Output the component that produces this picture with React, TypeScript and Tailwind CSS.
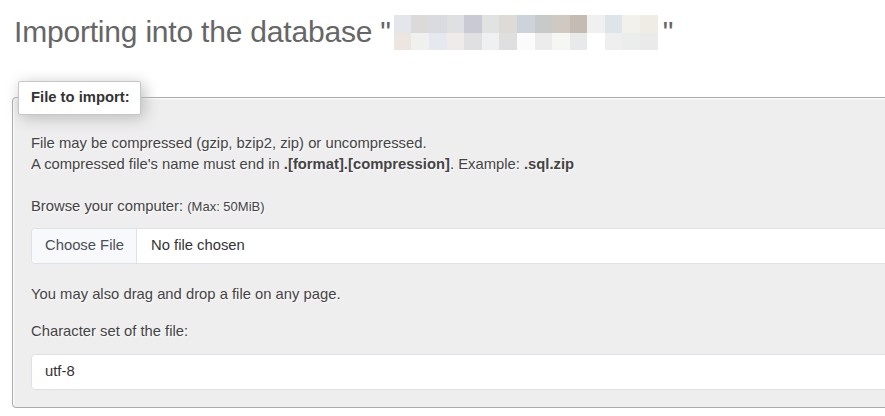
import React from 'react';

const blurTop = [
  '#e3e6ea', '#dcdad8', '#d8dbdf', '#dfe0e2', '#c9cad3', '#e1e3e2', '#dedbd6', '#ccd3da',
  '#c8c9c9', '#cfc9c2', '#c4bcb2', '#f0f0f0', '#dde4ea', '#f2f1ec', '#efebe5',
];
const blurBottom = [
  '#ede6e0', '#f0f1ee', '#e5e8ef', '#eeebea', '#e0e0e2', '#eff0f1', '#dfdfdf', '#fafbfa',
  '#ececed', '#f6f6f2', '#e8e9eb', '#ffffff', '#f0eff0', '#ebedec', '#eaeaea',
];

function BlurredName() {
  return (
    <span className="grid grid-cols-[repeat(15,17.6px)] mt-[2.5px] ml-[3px] mr-[5px]">
      {[...blurTop, ...blurBottom].map((c, i) => (
        <span key={i} className="h-[17.5px]" style={{ backgroundColor: c }} />
      ))}
    </span>
  );
}

export default function App() {
  return (
    <div className="w-[885px] h-[416px] overflow-hidden bg-white font-['Liberation_Sans',Arial,sans-serif] text-[#444] text-[14.8px] leading-[21.7px]">
      <div className="pl-3">
        <h2 className="flex items-start pt-[12.5px] pl-[2px] text-[30px] tracking-[-0.2px] leading-[38px] text-[#666] font-normal">
          <span>Importing into the database "</span>
          <BlurredName />
          <span>"</span>
        </h2>

        <fieldset className="w-[1100px] mt-[30px] border border-[#aaa] rounded-[4px] bg-[#eee] p-0 m-0 shadow-[inset_1px_1px_2px_#fff]">
          <legend className="ml-[5px] h-[34px] pl-3 pr-[10px] flex items-center bg-white border border-[#c6c6c6] rounded-[2px] font-bold text-[#333] shadow-[3px_3px_15px_#bbb]">
            File to import:
          </legend>

          <div className="px-[18px] pt-[18px] pb-[17px] [text-shadow:1px_1px_2px_#fff]">
            <p>File may be compressed (gzip, bzip2, zip) or uncompressed.</p>
            <p>
              A compressed file's name must end in <b>.[format].[compression]</b>. Example: <b>.sql.zip</b>
            </p>

            <p className="mt-5">
              Browse your computer: <span className="text-[13px]">(Max: 50MiB)</span>
            </p>
            <div className="mt-[10px] h-9 flex items-stretch bg-white border border-[#dee2e6] rounded-[4px] [text-shadow:none]">
              <span className="w-[105px] flex items-center pl-[13px] bg-[#f8f9fa] border-r border-[#dee2e6] rounded-l-[4px] text-[#495057]">
                Choose File
              </span>
              <span className="flex items-center pl-[14px] text-[#333]">No file chosen</span>
            </div>

            <p className="mt-5">You may also drag and drop a file on any page.</p>

            <p className="mt-4">Character set of the file:</p>
            <div className="mt-[10.5px] h-9 flex items-center pl-[13px] bg-white border border-[#dee2e6] rounded-[4px] text-[#333] [text-shadow:none]">
              utf-8
            </div>
          </div>
        </fieldset>
      </div>
    </div>
  );
}
